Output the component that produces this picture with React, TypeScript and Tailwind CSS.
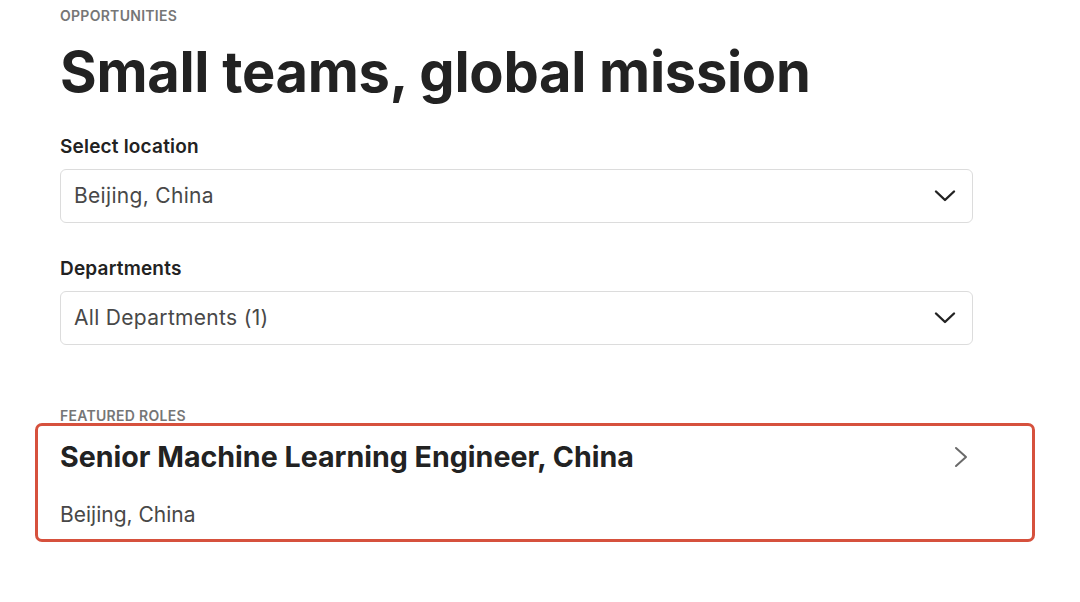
import React from 'react';

function Chevron() {
  return (
    <svg width="22" height="14" viewBox="0 0 22 14" fill="none" className="shrink-0">
      <path d="M2 2.5 L11 11 L20 2.5" stroke="#222222" strokeWidth="2.4" strokeLinecap="round" strokeLinejoin="round" />
    </svg>
  );
}

function SelectField({ label, value }: { label: string; value: string }) {
  return (
    <div>
      <div className="text-[19px] font-semibold text-[#222222] leading-[24px] tracking-[0.01em]">{label}</div>
      <div className="mt-[10px] w-[913px] h-[54px] border border-[#dcdcdc] rounded-[6px] flex items-center justify-between pl-[13px] pr-[16px]">
        <span className="text-[21px] text-[#484848] tracking-[0.015em]">{value}</span>
        <Chevron />
      </div>
    </div>
  );
}

export default function App() {
  return (
    <div className="w-[1080px] h-[602px] bg-white overflow-hidden font-['Inter',sans-serif]">
      <div className="pl-[60px] pt-[8px]">
        <div className="text-[14px] font-semibold tracking-[0.02em] text-[#767676] leading-[16px]">OPPORTUNITIES</div>
        <h1 className="mt-[14px] text-[56px] font-bold text-[#222222] leading-[68px] tracking-[-0.005em]">
          Small teams, global mission
        </h1>

        <div className="mt-[29px] space-y-[34px]">
          <SelectField label="Select location" value="Beijing, China" />
          <SelectField label="Departments" value="All Departments (1)" />
        </div>

        <div className="mt-[63px] text-[14px] font-semibold text-[#767676] leading-[16px] tracking-[0.02em]">FEATURED ROLES</div>
      </div>

      <div className="relative -mt-[1px] mx-[35px] w-[1000px]">
        <div className="absolute inset-0 border-[3px] border-[#d6513d] rounded-[7px] pointer-events-none" />
        <div className="pl-[25px] pr-[67px] pt-[16px] pb-[14px]">
          <div className="flex items-center justify-between">
            <span className="text-[28.6px] font-bold text-[#222222] leading-[36px]">
              Senior Machine Learning Engineer, China
            </span>
            <svg width="14" height="22" viewBox="0 0 14 22" fill="none">
              <path d="M2 2 L12 11 L2 20" stroke="#6a6a6a" strokeWidth="2" strokeLinecap="round" strokeLinejoin="round" />
            </svg>
          </div>
          <div className="mt-[27px] text-[21px] text-[#484848] leading-[26px]">Beijing, China</div>
        </div>
      </div>
    </div>
  );
}
